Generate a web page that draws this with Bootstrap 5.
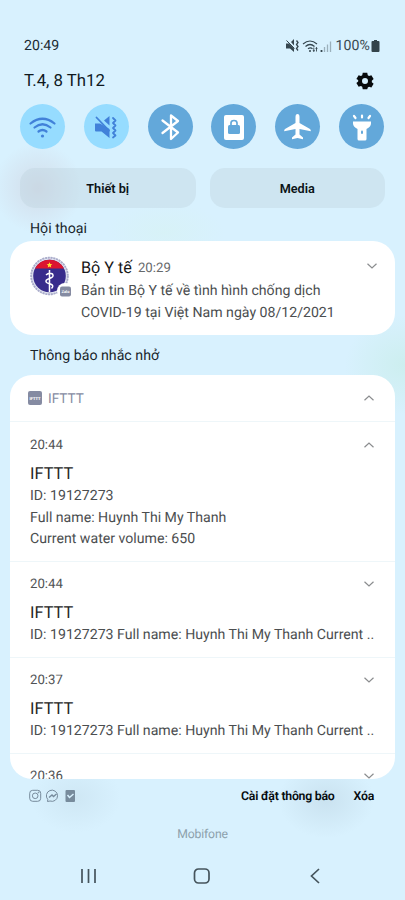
<!DOCTYPE html>
<html lang="vi">
<head>
<meta charset="utf-8">
<meta name="viewport" content="width=device-width, initial-scale=1">
<title>Thông báo</title>
<link href="https://cdn.jsdelivr.net/npm/bootstrap@5.3.0/dist/css/bootstrap.min.css" rel="stylesheet">
<style>
body{font-family:Roboto,"Noto Sans",sans-serif;font-size:14.14px;line-height:21.8px;color:#4b4e50;background:#d8f1fe;text-rendering:geometricPrecision}
.phone{width:405px;height:900px;white-space:nowrap;background:
radial-gradient(ellipse 45px 45px at 38px 188px,rgba(205,200,212,.5),transparent),
radial-gradient(ellipse 60px 50px at 405px 365px,rgba(190,235,220,.45),transparent),
radial-gradient(ellipse 45px 35px at 76px 798px,rgba(185,208,222,.3),transparent),
radial-gradient(ellipse 48px 38px at 326px 800px,rgba(185,208,222,.45),transparent),
radial-gradient(ellipse 60px 30px at 165px 232px,rgba(214,243,236,.4),transparent),#d8f1fe}
svg{display:block;flex:none}
.status{height:24px;margin-top:34px;padding-top:2px;color:#1c2b33}
.status-icons{padding-right:25px;color:#3b4a52}
.status-icons svg{margin-bottom:2px}
.percent{margin-left:-3px;margin-right:1px;letter-spacing:.1px}
.datebar{height:32px;margin-top:7px;padding-top:2px;font-size:16.8px;color:#10191e}
.gear{margin:0 31px 2px 0}
.toggles{margin-top:6px;height:46px;padding:0 21px 0 20px}
.toggle{width:45px;height:45px;background:#63a8da;color:#fff}
.toggle-on{background:#96dcff;color:#4181d9}
.toggle svg{width:45px;height:45px}
.pills{gap:14px;margin-top:19px;padding:0 20px}
.pill{height:40px;border-radius:15px;background:rgba(190,211,220,.38);color:#0b1317;font-weight:600;font-size:12.7px;border:0;padding:2px 0 0}
.heading{height:33px;padding:5px 30px 0;font-size:14.2px;line-height:32px;color:#18252c}
.heading-tall{height:40px}
.panel{margin:0 10px;border-radius:22px;background:#fff;border:0}
.talk{height:94px;padding:15px 16px 0 19px}
.talk-icon{margin-top:-1px}
.talk-head{height:25px;margin-top:-1px;margin-bottom:1px}
.who{font-size:16.2px;color:#171717}
.clock{font-size:13.2px;color:#66696b}
.sent{margin-left:6px;padding-top:2px}
.list-box{height:404px;overflow:hidden}
.apphead{height:47px;padding:0 20px 0 18px;color:#858ba2;border-bottom:1px solid #eef6f9}
.appname{font-size:13.6px;padding:3px 0 0 6px}
.note{height:96px;padding:12px 20px 0;border-bottom:1px solid #eef6f9}
.note-open{height:140px;padding-top:13px}
.note .clock{color:#505355}
.note svg{margin-bottom:2px}
.ttl{font-size:16.4px;color:#252525;line-height:22px;margin-top:7px}
.foot{height:34px;padding:1px 31px 0 29px;font-size:12.3px;letter-spacing:-.25px;color:#060b0e;font-weight:600}
.foot svg{margin-bottom:2px}
.foot span{padding-top:2px}
.clear{margin-left:19px}
.carrier{height:42px;line-height:43px;font-size:12.2px;letter-spacing:-.15px;color:#8ca0ab}
.navkeys{height:41px;color:#45545c}
</style>
<script src="https://cdn.jsdelivr.net/npm/bootstrap@5.3.0/dist/js/bootstrap.bundle.min.js"></script>
</head>
<body>
<svg width="0" height="0" class="position-absolute"><defs>
<symbol id="down" viewBox="0 0 12 8"><path d="M1.500 1.800l4.500 4.200 4.500-4.200" fill="none" stroke="#8b8d8f" stroke-width="1.200"/></symbol>
<symbol id="up" viewBox="0 0 12 8"><path d="M1.500 6.200L6 2l4.500 4.200" fill="none" stroke="#8b8d8f" stroke-width="1.200"/></symbol>
</defs></svg>
<main class="phone d-flex flex-column overflow-hidden">
<div class="status d-flex justify-content-between align-items-center ps-4">
<span>20:49</span>
<div class="status-icons d-flex align-items-center">
<svg width="52" height="20" viewBox="0 0 52 20" fill="none" stroke="#35464f">
<path d="M0 7.500h3l5 5V16l-4-3.500H0zM5 6l3-3v6.500z" fill="#35464f" stroke="none"/><path d="M.5 4.500l8 8" stroke-width="1"/>
<path d="M10.500 4.500l1.500 2-1.500 2 1.500 2-1.500 2 1.500 2" stroke-width="1.300"/>
<path d="M17 8q7-6 14 0M19.500 10.500q4.500-4 9 0M22 12.800q2.500-2 4.500 0" stroke-width="1.200"/><circle cx="24" cy="15" r="1" fill="#35464f" stroke="none"/>
<path d="M27.800 11.500v4M30.500 11.500v4" stroke-width=".9"/><path d="M26.500 14.200h2.600L27.800 16zM29.200 12.800h2.600L30.500 11z" fill="#35464f" stroke="none"/>
<path d="M35.500 14v2" stroke-width="1.800"/><path d="M38.500 11v5M41.500 8.500V16M44.500 5.500V16" stroke="#9bb0bb" stroke-width="1.300"/></svg>
<span class="percent">100%</span>
<svg width="9" height="14" viewBox="0 0 9 14" fill="#34434a"><path d="M3 1h3v1h1.500q1 0 1 1v9q0 1-1 1h-6q-1 0-1-1V3q0-1 1-1H3z"/></svg>
</div></div>
<div class="datebar d-flex justify-content-between align-items-center ps-4">
<span>T.4, 8 Th12</span>
<svg class="gear" width="18" height="18" viewBox="0 0 24 24" fill="#080b0d"><path fill-rule="evenodd" d="M9 1h6l.7 3.200 1.700 1 3.100-1 3 5.200-2.400 2.100v2l2.400 2.100-3 5.200-3.100-1-1.700 1L15 23H9l-.7-3.200-1.700-1-3.100 1-3-5.200 2.400-2.100v-2L.5 9.400l3-5.200 3.100 1 1.700-1zM12 8a4 4 0 100 8 4 4 0 000-8z"/></svg>
</div>
<div class="toggles d-flex justify-content-between align-items-center">
<div class="toggle toggle-on rounded-circle"><svg viewBox="0 0 45 45" fill="none" stroke="currentColor" stroke-width="2.200" stroke-linecap="round"><path d="M10.500 19.500q12-9.500 24 0M14.500 23.500q8-6.500 16 0M18.500 27.500q4-3 8 0"/><circle cx="22.500" cy="32" r="1.600" fill="currentColor" stroke="none"/></svg></div>
<div class="toggle toggle-on rounded-circle"><svg viewBox="0 0 45 45" fill="none" stroke="currentColor" stroke-width="1.800" stroke-linecap="round"><path d="M11 19.500h5l9.500 5.500v9L17.500 27.500H12q-1 0-1-1zM20 16.500l5.500-4.500v9.500z" fill="currentColor" stroke="none"/><path d="M12.500 13.500l12.500 13"/><path d="M29 14l2.500 2.500L29 19l2.500 2.500L29 24l2.500 2.500L29 29l2.500 2.500-2.500 2" stroke-linejoin="round"/></svg></div>
<div class="toggle rounded-circle"><svg viewBox="0 0 45 45" fill="none" stroke="currentColor" stroke-width="2.300" stroke-linejoin="round" stroke-linecap="round"><path d="M14.500 16.500l15.500 12-7 6.500V11.500l7 5.500-15.500 12"/></svg></div>
<div class="toggle rounded-circle"><svg viewBox="0 0 45 45"><rect x="13" y="11" width="20" height="25" rx="2" fill="currentColor"/><rect x="17" y="21" width="12" height="9" rx="1.500" fill="#63a8da"/><path d="M20 21v-2q0-2.500 3-2.500t3 2.500v2" fill="none" stroke="#63a8da" stroke-width="1.700"/></svg></div>
<div class="toggle rounded-circle"><svg viewBox="0 0 45 45" fill="currentColor"><path d="M22.500 10q2 0 2 3v6L35 25q1 1 .8 2.300L24.500 25v5.500l3.500 3v1.800l-5.500-1.200-5.500 1.200v-1.800l3.500-3V25L9.200 27.300Q9 26 10 25l10.500-6v-6q0-3 2-3z"/></svg></div>
<div class="toggle rounded-circle"><svg viewBox="0 0 45 45"><path d="M14 17.500h18v2q0 3-4.500 5.500V35q0 1.500-1.500 1.500h-6q-1.500 0-1.500-1.500V25Q14 22.500 14 19.500z" fill="currentColor"/><path d="M15 12l1.500 2M23 11.500v2M31 12L29.500 14" stroke="currentColor" stroke-width="2.200" stroke-linecap="round"/><rect x="22" y="26.500" width="2" height="3.500" rx="1" fill="#63a8da"/></svg></div>
</div>
<div class="pills d-flex"><button class="pill btn flex-fill w-50">Thiết bị</button><button class="pill btn flex-fill w-50">Media</button></div>
<div class="heading">Hội thoại</div>
<section class="panel talk d-flex">
<svg class="talk-icon" width="44" height="44" viewBox="0 0 44 44"><circle cx="20.500" cy="21" r="19" fill="#e0e3f0"/><circle cx="20.500" cy="21" r="18.300" fill="none" stroke="#a9abc9" stroke-width="1.800" stroke-dasharray="2 .8"/><circle cx="20.500" cy="21" r="16.300" fill="#382c8c"/><path d="M6 13.500a16.300 16.300 0 0129 0z" fill="#dc1430"/><path d="M20.500 7.300l.8 1.700 2 .2-1.500 1.300.4 1.900-1.700-1-1.700 1 .4-1.900-1.500-1.300 2-.2z" fill="#ffe22d"/><path d="M20.500 15v22M17 20q3-3 6.500-1 2 3-3 4.500-5 1.500-3 4 1.500 1 4 1.500 4 1.500 1 4.500" fill="none" stroke="#fff" stroke-width="1.500"/><circle cx="36" cy="36" r="8" fill="#fff"/><rect x="31" y="31.500" width="11" height="10" rx="2" fill="#858ba2"/><text x="36.500" y="38" font-size="4" fill="#fff" text-anchor="middle" font-weight="700">Zalo</text></svg>
<div class="flex-fill ps-2">
<div class="talk-head d-flex align-items-center"><span class="who">Bộ Y tế</span><span class="clock sent">20:29</span><svg class="ms-auto mb-1" width="14" height="8"><use href="#down"/></svg></div>
<div>Bản tin Bộ Y tế về tình hình chống dịch</div><div>COVID-19 tại Việt Nam ngày 08/12/2021</div>
</div></section>
<div class="heading heading-tall">Thông báo nhắc nhở</div>
<section class="panel list-box">
<div class="apphead d-flex align-items-center"><svg width="14" height="14"><rect width="14" height="14" rx="2" fill="#858ba2"/><text x="7" y="8.500" text-anchor="middle" fill="#fff" font-size="4" font-weight="900">IFTTT</text></svg><span class="appname">IFTTT</span><svg class="ms-auto" width="12" height="8"><use href="#up"/></svg></div>
<article class="note note-open"><div class="d-flex align-items-center"><span class="clock">20:44</span><svg class="ms-auto" width="12" height="8"><use href="#up"/></svg></div><div class="ttl">IFTTT</div><div>ID: 19127273</div><div>Full name: Huynh Thi My Thanh</div><div>Current water volume: 650</div></article>
<article class="note"><div class="d-flex align-items-center"><span class="clock">20:44</span><svg class="ms-auto" width="12" height="8"><use href="#down"/></svg></div><div class="ttl">IFTTT</div><div>ID: 19127273 Full name: Huynh Thi My Thanh Current ..</div></article>
<article class="note"><div class="d-flex align-items-center"><span class="clock">20:37</span><svg class="ms-auto" width="12" height="8"><use href="#down"/></svg></div><div class="ttl">IFTTT</div><div>ID: 19127273 Full name: Huynh Thi My Thanh Current ..</div></article>
<article class="note"><div class="d-flex align-items-center"><span class="clock">20:36</span><svg class="ms-auto" width="12" height="8"><use href="#down"/></svg></div></article>
</section>
<div class="foot d-flex align-items-center">
<svg width="47" height="14" viewBox="0 0 47 14" fill="none" stroke="#778b9c"><rect x=".7" y="1.300" width="11" height="11" rx="3"/><circle cx="6.200" cy="6.800" r="2.800"/><circle cx="9.500" cy="3.500" r=".4"/><path d="M18.500 12.500l.3-2A5.600 5.600 0 1121 12z"/><path d="M20 8.500l3-2.500 1.500 1.500L27.500 5" stroke-width="1.400"/><rect x="36.500" y="1" width="9.500" height="12" rx="1" fill="#778b9c" stroke="none"/><path d="M38.500 6l2 2.500L44.500 5" stroke="#d8f1fe" stroke-width="1.500"/></svg>
<span class="ms-auto">Cài đặt thông báo</span><span class="clear">Xóa</span></div>
<div class="carrier text-center">Mobifone</div>
<div class="navkeys d-flex align-items-center"><svg width="405" height="20" fill="none" stroke="currentColor" stroke-width="1.700"><path d="M82 3v14M88.500 3v14M95 3v14"/><rect x="194.500" y="3" width="14.500" height="14" rx="4"/><path d="M319 3l-7.500 7 7.500 7"/></svg></div>
</main>
</body>
</html>
